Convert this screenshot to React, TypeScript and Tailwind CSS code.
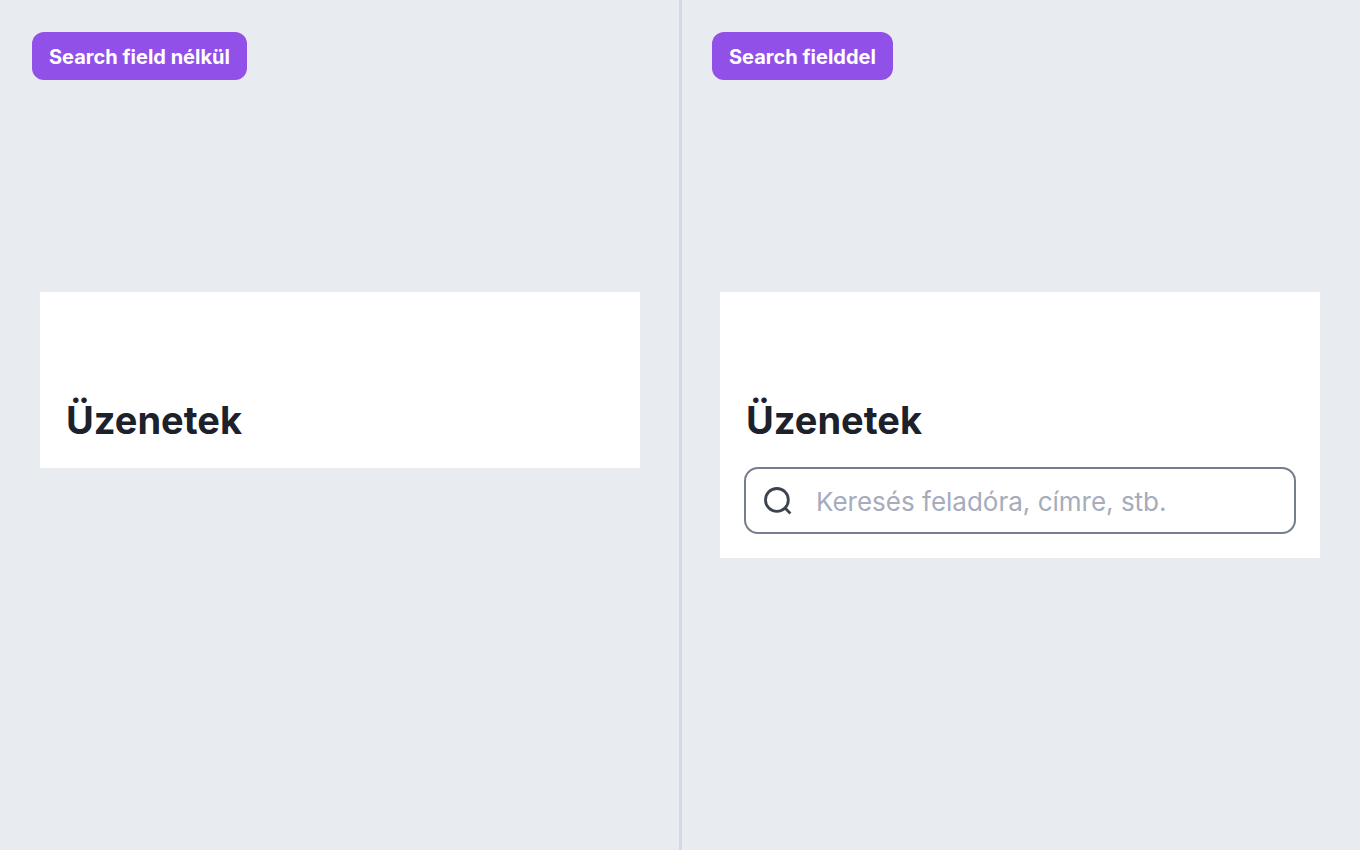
import {ReactNode} from 'react';


type PanelProps = {
    label: string;
    children: ReactNode;
};


function SearchIcon() {
    return (
        <svg viewBox="0 0 32 32" className="size-8 shrink-0" fill="none" stroke="#3d4450" strokeWidth="2.8" aria-hidden="true">
            <circle cx="14.9" cy="14.9" r="11.4"/>
            <path d="M22.6 22.6L28.4 28.4"/>
        </svg>
    );
}

function SearchField() {
    return (
        <label className="mt-[23px] flex h-[67px] items-center gap-[22px] rounded-[14px] border-2 border-[#767d8c] px-4">
            <SearchIcon/>
            <input
                type="search"
                aria-label="Keresés"
                placeholder="Keresés feladóra, címre, stb."
                className="min-w-0 flex-1 bg-transparent pt-0.5 text-[26px] text-[#1d212b] outline-none placeholder:text-[#a6acbc]"
            />
        </label>
    );
}

function Panel({label, children}: PanelProps) {
    return (
        <section className="flex min-w-0 flex-1 flex-col px-8 pt-8">
            <h2 className="flex h-12 items-center self-start rounded-xl bg-[#9150e8] px-[17px] pt-0.5 text-xl font-bold text-white">{label}</h2>
            <div className="mx-2 mt-53 bg-white px-6 pt-26 pb-6">
                {children}
            </div>
        </section>
    );
}

function Title() {
    return <h1 className="px-0.5 text-[38px] leading-12 font-bold text-[#1d212b]">Üzenetek</h1>;
}

export default function App() {
    return (
        <main className="flex min-h-screen bg-[#e8ecf1] font-['Inter',sans-serif]">
            <Panel label="Search field nélkül">
                <Title/>
            </Panel>
            <div className="-mr-0.5 -ml-px w-[3px] bg-[#d5d8e6]"/>
            <Panel label="Search fielddel">
                <Title/>
                <SearchField/>
            </Panel>
        </main>
    );
}
